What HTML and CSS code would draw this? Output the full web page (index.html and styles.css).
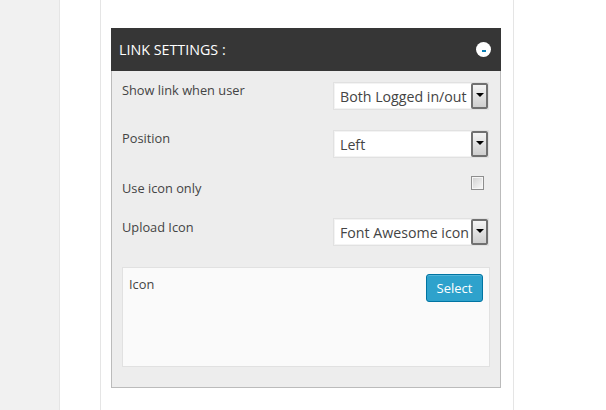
FILE: index.html
```html
<!DOCTYPE html>
<html lang="en">
  <head>
    <meta charset="UTF-8" />
    <meta name="viewport" content="width=device-width, initial-scale=1.0" />
    <title>Link settings</title>
    <link rel="stylesheet" href="styles.css">
  </head>
  <body>
    <div class="sidebar"></div>
    <div class="gutter">
      <div class="content">
        <div class="panel">
          <div class="panel-head">
            <span class="panel-title">LINK SETTINGS :</span>
            <span class="toggle"><span class="toggle-dash"></span></span>
          </div>
          <div class="panel-body">
            <div class="row row-select">
              <span class="label label-first">Show link when user</span>
              <div class="select">
                <span class="select-text">Both Logged in/out</span>
                <span class="select-arrow"></span>
              </div>
            </div>
            <div class="row row-select row-position">
              <span class="label label-first">Position</span>
              <div class="select">
                <span class="select-text">Left</span>
                <span class="select-arrow"></span>
              </div>
            </div>
            <div class="row row-check">
              <span class="label">Use icon only</span>
              <span class="checkbox"></span>
            </div>
            <div class="row row-select">
              <span class="label">Upload Icon</span>
              <div class="select">
                <span class="select-text">Font Awesome icon</span>
                <span class="select-arrow"></span>
              </div>
            </div>
            <div class="icon-box">
              <span class="label">Icon</span>
              <button class="btn-select">Select</button>
            </div>
          </div>
        </div>
      </div>
    </div>
  </body>
</html>
```

FILE: styles.css
```css
html,
body {
  height: 100%;
}

body {
  font-family: "Open Sans", Arial, sans-serif;
  background-color: #fff;
  margin: 0;
  color: #444;
  display: flex;
  overflow: hidden;
}

.sidebar {
  width: 59px;
  flex: none;
  background-color: #f1f1f1;
  border-right: 1px solid #e5e5e5;
}

.gutter {
  height: 100%;
  padding-left: 40px;
}

.content {
  width: 414px;
  height: 100%;
  box-sizing: border-box;
  padding: 28px 0 0 10px;
  border-left: 1px solid #e5e5e5;
  border-right: 1px solid #e5e5e5;
}

.panel {
  width: 390px;
}

.panel-head {
  height: 43px;
  background-color: #363636;
  color: #fff;
  display: flex;
  align-items: center;
  justify-content: space-between;
  padding: 0 10px 0 8px;
}

.panel-title {
  font-size: 14.3px;
}

.toggle {
  width: 15px;
  height: 15px;
  border-radius: 50%;
  background-color: #fff;
  display: flex;
  align-items: center;
  justify-content: center;
}

.toggle-dash {
  width: 4px;
  height: 2px;
  margin-top: 2px;
  background-color: #0a7fb5;
}

.panel-body {
  height: 317px;
  box-sizing: border-box;
  background-color: #ededed;
  border: 1px solid #bbb;
  border-top: none;
  padding: 11px 10px 0;
}

.row {
  display: flex;
  justify-content: space-between;
  align-items: flex-start;
}

.label {
  font-size: 12.8px;
  line-height: 18px;
  color: #444;
}

.row-select {
  height: 28px;
}

.label-first {
  margin-top: -1px;
}

.row-position {
  margin-top: 20px;
}

.row-check {
  height: 60px;
  padding: 21px 6px 0 0;
  box-sizing: border-box;
}

.select {
  width: 156px;
  height: 28px;
  box-sizing: border-box;
  border: 1px solid #e1e1e1;
  box-shadow: inset 0 0 0 1px #f3f3f3;
  background-color: #fff;
  display: flex;
  justify-content: space-between;
  margin-right: 1px;
}

.select-text {
  font-size: 14.2px;
  line-height: 27px;
  padding-left: 6px;
  color: #444;
  white-space: nowrap;
}

.select-arrow {
  width: 17px;
  height: 26px;
  box-sizing: border-box;
  border: 2px solid #707070;
  border-radius: 2px;
  background: linear-gradient(#f4f4f4, #cfcfcf);
  flex: none;
  display: flex;
  align-items: center;
  justify-content: center;
}

.select-arrow::after {
  content: "";
  width: 0;
  height: 0;
  margin-bottom: 2px;
  border-left: 4px solid transparent;
  border-right: 4px solid transparent;
  border-top: 4px solid #000;
}

.checkbox {
  width: 13px;
  height: 14px;
  box-sizing: border-box;
  margin-top: -3px;
  border: 1px solid #8e8e8e;
  box-shadow: inset 0 0 0 1px #f6f6f6;
  background: linear-gradient(135deg, #cfcfcf, #fafafa);
}

.icon-box {
  width: 368px;
  height: 100px;
  box-sizing: border-box;
  margin-top: 21px;
  background-color: #fafafa;
  border: 1px solid #e1e1e1;
  padding: 6px 6px 0;
  display: flex;
  justify-content: space-between;
  align-items: flex-start;
}

.icon-box .label {
  margin-top: 1px;
}

.btn-select {
  width: 57px;
  height: 28px;
  padding: 0;
  font-family: inherit;
  font-size: 13px;
  color: #fff;
  background-color: #2ea2cc;
  border: 1px solid #0074a2;
  border-radius: 3px;
  box-shadow: inset 0 1px 0 rgba(120, 200, 230, 0.5);
}
```
